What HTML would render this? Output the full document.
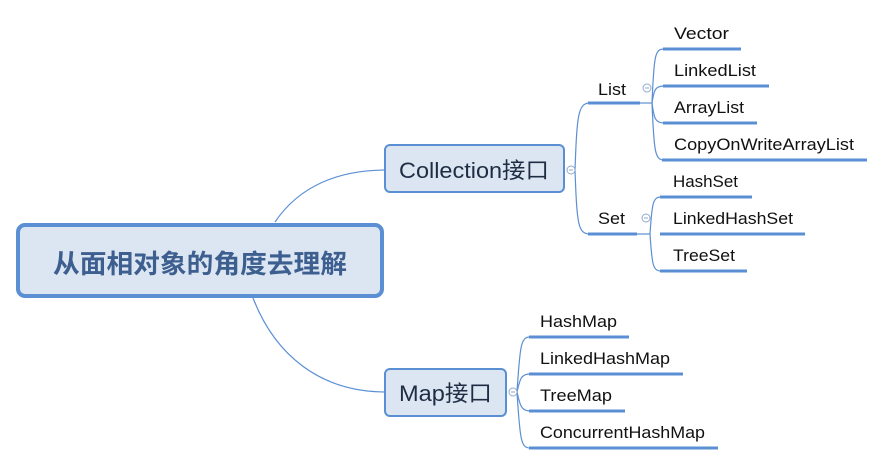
<!DOCTYPE html>
<html><head><meta charset="utf-8"><style>
html,body{margin:0;padding:0;background:#fff;width:885px;height:465px;overflow:hidden}
text{font-family:"Liberation Sans","Noto Sans CJK SC",sans-serif}
</style></head><body>
<svg width="885" height="465" xmlns="http://www.w3.org/2000/svg">
<g fill="none" stroke="#5b8fd4" stroke-width="1.2">
<path d="M275 222 C300 185 340 170 386 170"/>
<path d="M253 298 C275 355 320 392 386 392"/>
<path d="M575 170 C577 115 578 103 590 103"/>
<path d="M575 170 C577 225 578 234 590 234"/>
<path d="M640 103 L652 103"/>
<path d="M652 103 C654 55 655 49 664 49"/>
<path d="M652 103 C654 90 655 86 664 86"/>
<path d="M652 103 C654 118 655 123 664 123"/>
<path d="M652 103 C654 152 655 160 664 160"/>
<path d="M637 234 L650 234"/>
<path d="M650 234 C652 203 653 197 661 197"/>
<path d="M650 234 C652 265 653 271 661 271"/>
<path d="M517 392 C520 345 521 337 530 337"/>
<path d="M517 392 C520 379 521 374 530 374"/>
<path d="M517 392 C520 405 521 411 530 411"/>
<path d="M517 392 C520 440 521 448 530 448"/>
</g>
<g stroke="#5b8fd4" stroke-width="3" fill="none">
<path d="M588 103H640M588 234H637"/>
<path d="M663 49H741M663 86H769M663 123H757M662 160H867"/>
<path d="M660 197H752M660 234H805M660 271H747"/>
<path d="M529 337H629M529 374H683M529 411H625M529 448H718"/>
</g>
<g fill="#fff" stroke="#8fa9cc" stroke-width="1">
<circle cx="571" cy="170" r="4"/><circle cx="647" cy="88" r="4"/><circle cx="646" cy="218" r="4"/><circle cx="513" cy="392" r="4"/>
</g>
<g stroke="#8fa9cc" stroke-width="1"><path d="M569 170h4M645 88h4M644 218h4M511 392h4"/></g>
<rect x="18" y="225" width="364" height="71" rx="7" fill="#dce6f2" stroke="#5b8fd4" stroke-width="4"/>
<rect x="385" y="145" width="179" height="47" rx="5" fill="#dce6f2" stroke="#5b8fd4" stroke-width="2"/>
<rect x="385" y="369" width="121" height="47" rx="5" fill="#dce6f2" stroke="#5b8fd4" stroke-width="2"/>
<text x="53" y="273" font-size="26" font-weight="bold" fill="#3d5f8f" textLength="294" lengthAdjust="spacingAndGlyphs">从面相对象的角度去理解</text>
<text x="399" y="178" font-size="22" fill="#1f2d44" textLength="150" lengthAdjust="spacingAndGlyphs">Collection接口</text>
<text x="399" y="401" font-size="22" fill="#1f2d44" textLength="93" lengthAdjust="spacingAndGlyphs">Map接口</text>
<g font-size="17" fill="#111" lengthAdjust="spacingAndGlyphs">
<text x="598" y="95" textLength="28" lengthAdjust="spacingAndGlyphs">List</text>
<text x="598" y="224" textLength="27" lengthAdjust="spacingAndGlyphs">Set</text>
<text x="674" y="39" textLength="55" lengthAdjust="spacingAndGlyphs">Vector</text>
<text x="674" y="76" textLength="82" lengthAdjust="spacingAndGlyphs">LinkedList</text>
<text x="674" y="113" textLength="70" lengthAdjust="spacingAndGlyphs">ArrayList</text>
<text x="674" y="150" textLength="180" lengthAdjust="spacingAndGlyphs">CopyOnWriteArrayList</text>
<text x="673" y="187" textLength="65" lengthAdjust="spacingAndGlyphs">HashSet</text>
<text x="673" y="224" textLength="120" lengthAdjust="spacingAndGlyphs">LinkedHashSet</text>
<text x="673" y="261" textLength="62" lengthAdjust="spacingAndGlyphs">TreeSet</text>
<text x="540" y="327" textLength="77" lengthAdjust="spacingAndGlyphs">HashMap</text>
<text x="540" y="364" textLength="130" lengthAdjust="spacingAndGlyphs">LinkedHashMap</text>
<text x="540" y="401" textLength="72" lengthAdjust="spacingAndGlyphs">TreeMap</text>
<text x="540" y="438" textLength="165" lengthAdjust="spacingAndGlyphs">ConcurrentHashMap</text>
</g>
</svg>
</body></html>
